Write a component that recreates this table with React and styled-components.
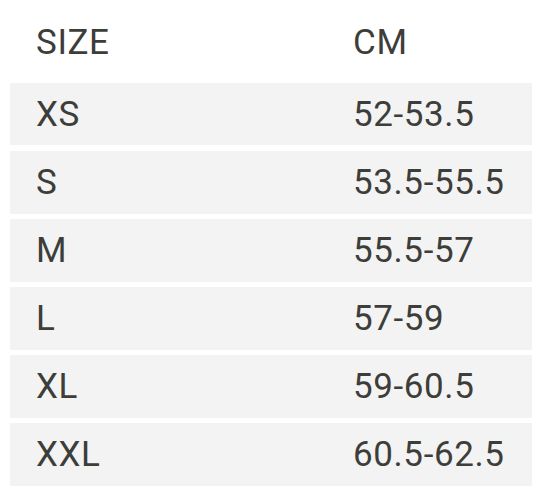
import React from "react";
import styled, { createGlobalStyle } from "styled-components";

const GlobalStyle = createGlobalStyle`
    body {
        margin: 0;
        background: #ffffff;
        font-family: Roboto, "Liberation Sans", sans-serif;
    }
`;

const Table = styled.div`
    width: 522px;
    padding: 0 10px;
    display: flex;
    flex-direction: column;
    gap: 5.6px;
    color: #3d3d3a;
`;

const Row = styled.div`
    display: grid;
    grid-template-columns: 317px 1fr;
    align-items: center;
    padding-left: 26px;
    box-sizing: border-box;
    height: ${(p) => (p.head ? "77.4px" : "62.5px")};
    padding-top: ${(p) => (p.head ? "8px" : "0")};
    background: ${(p) => (p.head ? "transparent" : "#f3f3f3")};
`;

const Cell = styled.span`
    font-size: 35px;
    line-height: 1;
    letter-spacing: 0.6px;
`;

const sizes = [
    ["XS", "52-53.5"],
    ["S", "53.5-55.5"],
    ["M", "55.5-57"],
    ["L", "57-59"],
    ["XL", "59-60.5"],
    ["XXL", "60.5-62.5"],
];

const App = () => {
    return (
        <>
            <GlobalStyle />
            <Table>
                <Row head>
                    <Cell>SIZE</Cell>
                    <Cell>CM</Cell>
                </Row>
                {sizes.map(([size, cm]) => (
                    <Row key={size}>
                        <Cell>{size}</Cell>
                        <Cell>{cm}</Cell>
                    </Row>
                ))}
            </Table>
        </>
    );
};

export default App;
